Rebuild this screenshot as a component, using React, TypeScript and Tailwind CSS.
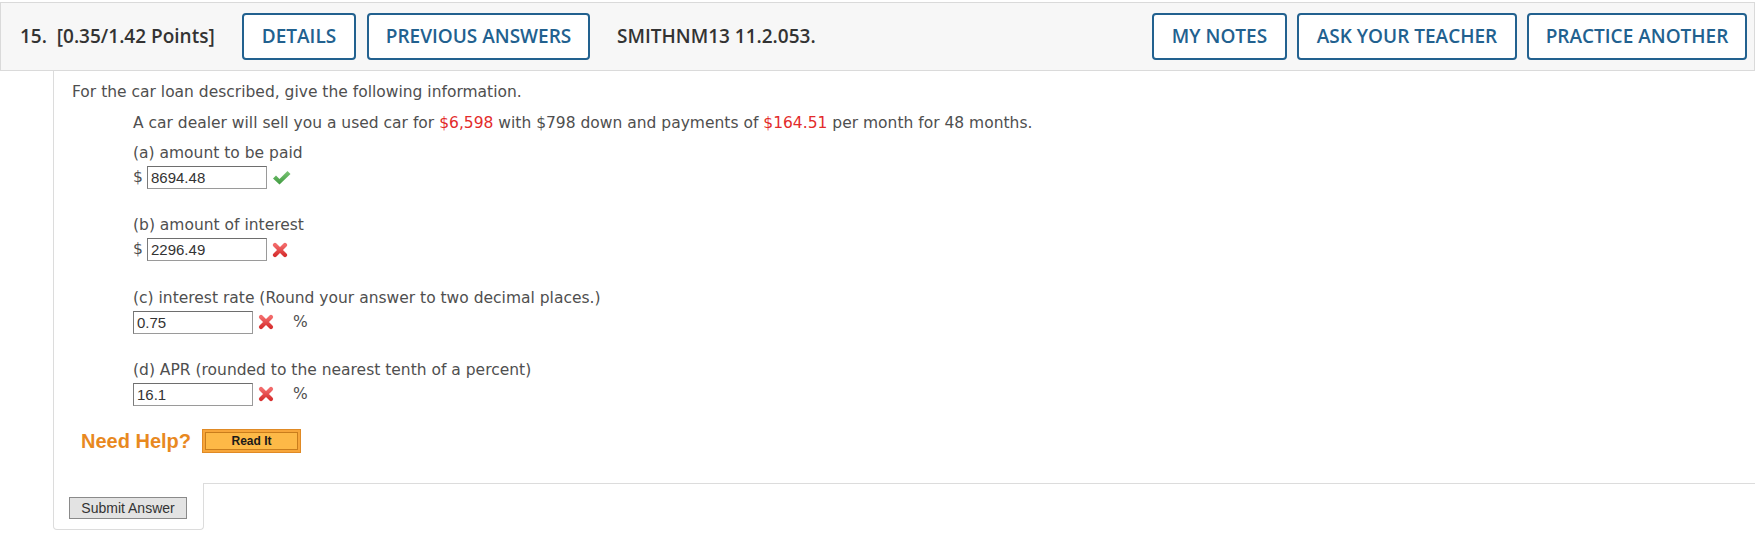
import React from "react";

const headerBtn =
  "h-[47px] rounded-[4px] border-2 border-[#22618f] bg-white text-[#22618f] text-[19px] font-semibold flex items-center justify-center";

function CheckIcon() {
  return (
    <svg width="19" height="15" viewBox="0 0 19 15" className="ml-[5px]">
      <defs>
        <linearGradient id="chk" x1="0" y1="0" x2="0" y2="1">
          <stop offset="0" stopColor="#7cc576" />
          <stop offset="1" stopColor="#3e9a3f" />
        </linearGradient>
      </defs>
      <path d="M1 8.5 L4 5.5 L7.5 9 L15.5 1 L18.5 4 L7.5 14.5 Z" fill="url(#chk)" />
    </svg>
  );
}

function CrossIcon({ className = "" }: { className?: string }) {
  return (
    <svg width="16" height="16" viewBox="0 0 16 16" className={className}>
      <defs>
        <linearGradient id="crs" x1="0" y1="0" x2="0" y2="1">
          <stop offset="0" stopColor="#f26a6a" />
          <stop offset="1" stopColor="#d83232" />
        </linearGradient>
      </defs>
      <path
        d="M3 3 L13 13 M13 3 L3 13"
        stroke="url(#crs)"
        strokeWidth="4.2"
        strokeLinecap="round"
      />
    </svg>
  );
}

function AnswerInput({ value }: { value: string }) {
  return (
    <div className="w-[120px] h-[23px] border border-[#9a9a9a] border-t-[#6e6e6e] border-l-[#7a7a7a] bg-white px-[3px] flex items-center text-[15px] text-[#333] font-['Liberation_Sans',Arial,sans-serif] leading-none">
      {value}
    </div>
  );
}

export default function App() {
  return (
    <div className="w-full h-[541px] bg-white overflow-hidden font-['DejaVu_Sans',Verdana,sans-serif]">
      {/* question header */}
      <div className="mt-[2px] h-[69px] border border-[#dadada] bg-[#f7f7f7] flex items-center pl-[19px] pr-[7px] font-['Open_Sans',sans-serif]">
        <span className="whitespace-pre text-[19px] font-semibold text-[#333] w-[222px]">
          {"15.  [0.35/1.42 Points]"}
        </span>
        <div className={headerBtn + " w-[114px]"}>DETAILS</div>
        <div className={headerBtn + " w-[223px] ml-[11px]"}>PREVIOUS ANSWERS</div>
        <span className="ml-[27px] text-[19px] font-semibold text-[#333]">
          SMITHNM13 11.2.053.
        </span>
        <div className="ml-auto flex gap-[10px]">
          <div className={headerBtn + " w-[135px]"}>MY NOTES</div>
          <div className={headerBtn + " w-[220px]"}>ASK YOUR TEACHER</div>
          <div className={headerBtn + " w-[220px]"}>PRACTICE ANOTHER</div>
        </div>
      </div>

      {/* question body */}
      <div className="ml-[53px]">
        <div className="border-l border-[#dcdcdc] pl-[18px] pt-[11px] h-[412px] text-[15.5px] text-[#4f4f4f]">
          <div className="h-[20px] leading-[20px]">
            For the car loan described, give the following information.
          </div>
          <div className="ml-[61px] mt-[11px]">
            <div className="h-[20px] leading-[20px]">
              A car dealer will sell you a used car for{" "}
              <span className="text-[#e32b2b]">$6,598</span> with $798 down and
              payments of <span className="text-[#e32b2b]">$164.51</span> per
              month for 48 months.
            </div>

            {/* (a) */}
            <div className="mt-[10px] h-[20px] leading-[20px]">(a) amount to be paid</div>
            <div className="mt-[3px] flex items-center">
              <span className="w-[14px]">$</span>
              <AnswerInput value="8694.48" />
              <CheckIcon />
            </div>

            {/* (b) */}
            <div className="mt-[26px] h-[20px] leading-[20px]">(b) amount of interest</div>
            <div className="mt-[3px] flex items-center">
              <span className="w-[14px]">$</span>
              <AnswerInput value="2296.49" />
              <CrossIcon className="ml-[5px]" />
            </div>

            {/* (c) */}
            <div className="mt-[26px] h-[20px] leading-[20px]">
              (c) interest rate (Round your answer to two decimal places.)
            </div>
            <div className="mt-[3px] flex items-center">
              <AnswerInput value="0.75" />
              <CrossIcon className="ml-[5px]" />
              <span className="ml-[19px]">%</span>
            </div>

            {/* (d) */}
            <div className="mt-[26px] h-[20px] leading-[20px]">
              (d) APR (rounded to the nearest tenth of a percent)
            </div>
            <div className="mt-[3px] flex items-center">
              <AnswerInput value="16.1" />
              <CrossIcon className="ml-[5px]" />
              <span className="ml-[19px]">%</span>
            </div>
          </div>

          {/* help */}
          <div className="mt-[20px] ml-[9px] flex items-center font-['Liberation_Sans',Arial,sans-serif]">
            <span className="text-[20px] font-bold text-[#e8891f]">Need Help?</span>
            <div className="ml-[11px] w-[99px] h-[24px] border border-[#e08a25] bg-[#f7a63a] p-[2px]">
              <div className="h-full border border-[#c97d1c] bg-[#fdb947] flex items-center justify-center text-[12px] font-bold text-[#1a1a1a]">
                Read It
              </div>
            </div>
          </div>
        </div>

        {/* submit tab */}
        <div className="flex">
          <div className="w-[151px] h-[47px] border-l border-r border-b border-[#dcdcdc] rounded-b-[4px] pl-[15px] pt-[13px]">
            <button className="w-[118px] h-[22px] border border-[#8a8a8a] bg-[#e3e3e3] text-[14px] text-[#333] font-['Liberation_Sans',Arial,sans-serif] leading-none">
              Submit Answer
            </button>
          </div>
          <div className="flex-1 border-t border-[#dcdcdc]" />
        </div>
      </div>
    </div>
  );
}
